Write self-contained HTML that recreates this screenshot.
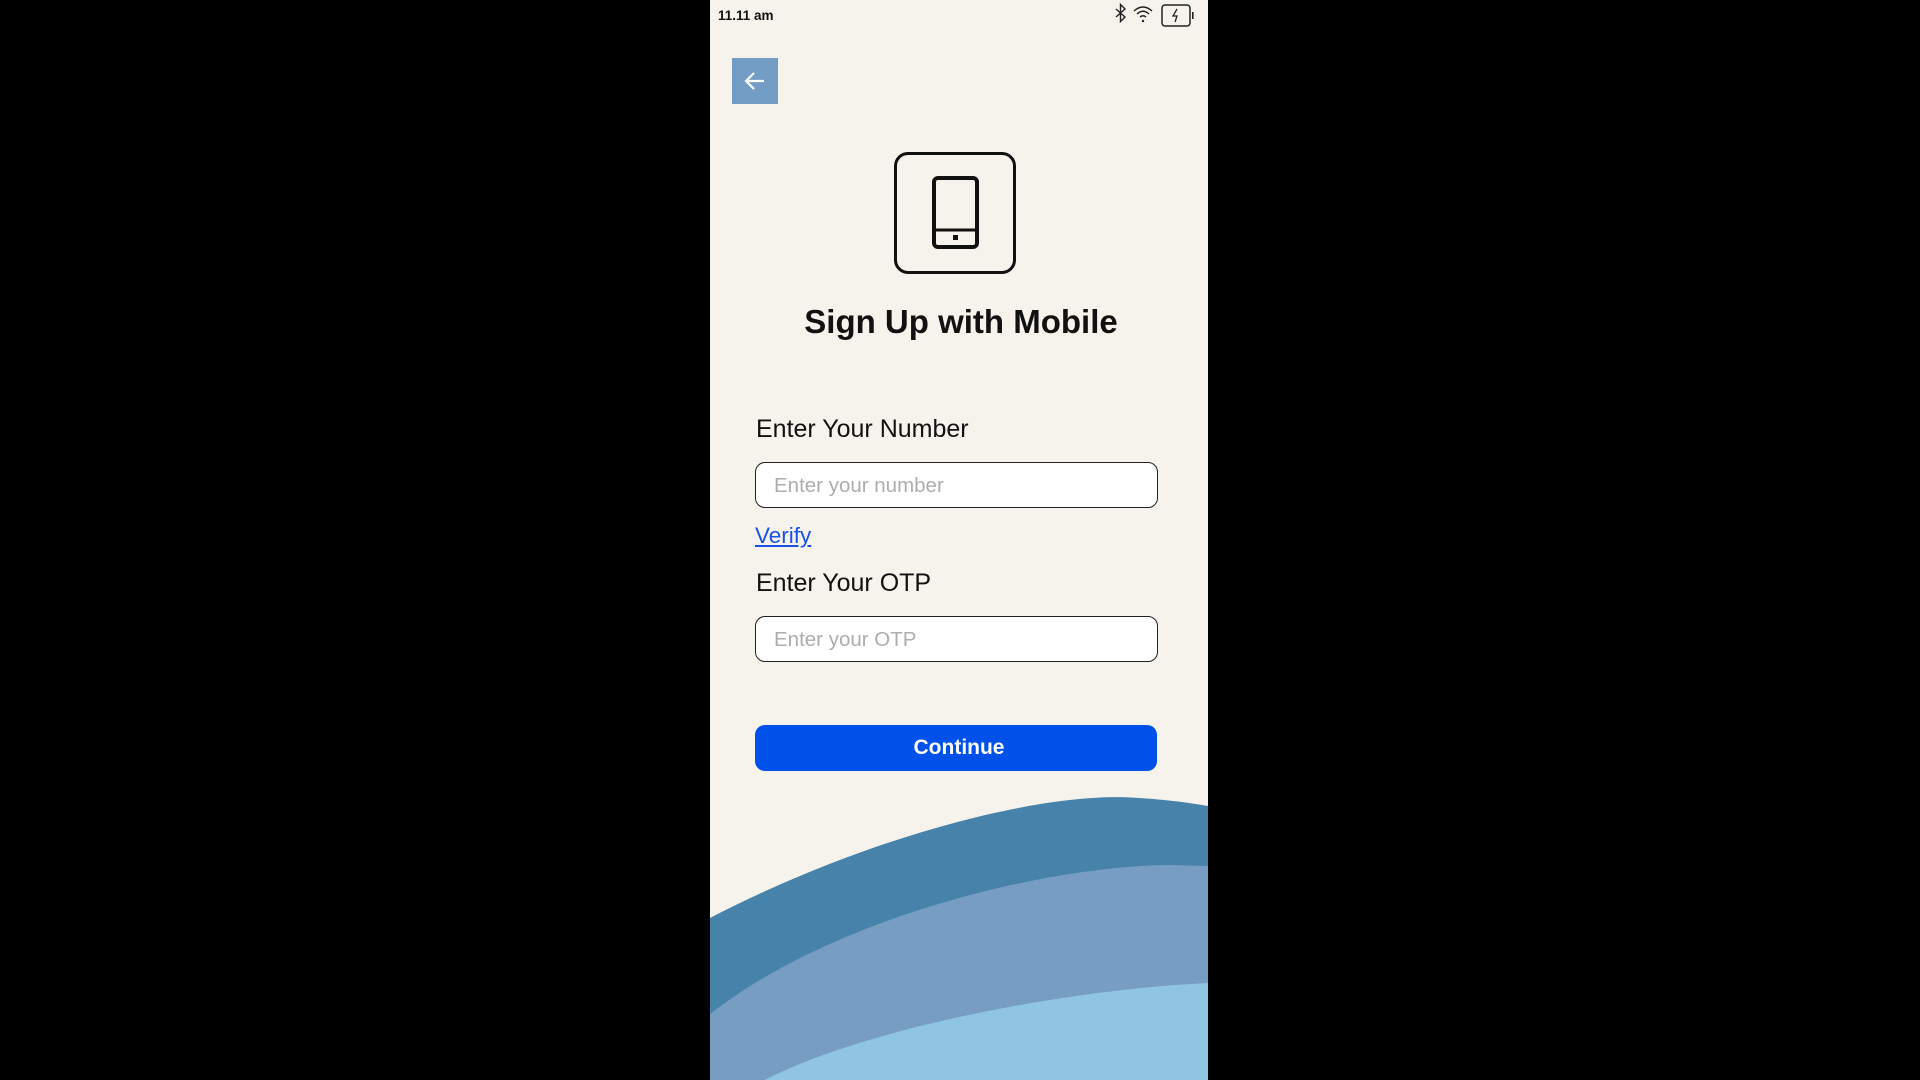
<!DOCTYPE html>
<html><head><meta charset="utf-8"><style>
html,body{margin:0;padding:0;background:#000;width:1920px;height:1080px;overflow:hidden;font-family:"Liberation Sans",sans-serif}
#ph{position:absolute;left:710px;top:0;width:498px;height:1080px;background:#f6f3ec;overflow:hidden}
.a{position:absolute}
.inp{position:absolute;left:45px;width:403px;height:46px;border:1.5px solid #222;border-radius:10px;background:#fff;box-sizing:border-box}
.inp span{position:absolute;left:18px;top:11px;font-size:20.5px;color:#adadad}
.lbl{position:absolute;left:46px;font-size:25px;color:#111}
</style></head><body>
<div id="ph">
<div class="a" style="left:8px;top:8px;font-size:13.5px;font-weight:bold;color:#111">11.11 am</div>
<svg class="a" style="left:402px;top:2px" width="96" height="26" viewBox="0 0 96 26">
<path d="M4 7 L13 15 L8.5 19.5 L8.5 2.5 L13 7 L4 15" fill="none" stroke="#222" stroke-width="1.4"/>
<path d="M22 9 Q31 1 40 9 M25 12 Q31 6.5 37 12 M28 15 Q31 12.5 34 15" fill="none" stroke="#222" stroke-width="1.5"/>
<circle cx="31" cy="19" r="1.2" fill="#222"/>
<rect x="50" y="3" width="28" height="21" rx="3" fill="none" stroke="#222" stroke-width="1.5"/>
<rect x="80" y="10" width="1.6" height="7" fill="#222"/>
<path d="M65 7 L61 14 L65 14 L63 20" fill="none" stroke="#222" stroke-width="1.3"/>
</svg>
<div class="a" style="left:22px;top:58px;width:46px;height:46px;background:#739dc4"></div>
<svg class="a" style="left:22px;top:58px" width="46" height="46"><path d="M32 23 H14 M22 15 L14 23 L22 31" fill="none" stroke="#fff" stroke-width="2.2"/></svg>
<div class="a" style="left:184px;top:152px;width:122px;height:122px;border:3px solid #111;border-radius:14px;box-sizing:border-box"></div>
<svg class="a" style="left:222px;top:176px" width="50" height="74"><rect x="2" y="2" width="43" height="69" rx="4" fill="none" stroke="#111" stroke-width="4"/><path d="M2 54 H45" stroke="#111" stroke-width="3"/><rect x="21" y="59" width="5" height="5" fill="#111"/></svg>
<div class="a" style="left:0;width:498px;text-align:center;top:303px;font-size:33px;font-weight:bold;color:#111;padding-left:4px;box-sizing:border-box">Sign Up with Mobile</div>
<div class="lbl" style="top:415px">Enter Your Number</div>
<div class="inp" style="top:462px"><span>Enter your number</span></div>
<div class="a" style="left:45px;top:523px;font-size:22.5px;color:#1a52e6;text-decoration:underline">Verify</div>
<div class="lbl" style="top:569px">Enter Your OTP</div>
<div class="inp" style="top:616px"><span>Enter your OTP</span></div>
<div class="a" style="left:45px;top:725px;width:402px;height:46px;background:#0050ea;border-radius:10px;color:#fff;font-size:21px;font-weight:bold;text-align:center;line-height:46px;padding-left:6px;box-sizing:border-box">Continue</div>
<svg class="a" style="left:0;top:0" width="498" height="1080">
<path d="M0,918 C150,840 330,790 429,798 C460,800 480,803 498,806 L498,1080 L0,1080 Z" fill="#4682aa"/>
<path d="M0,1014 C120,920 330,866 460,865 L498,866 V1080 H0Z" fill="#779dc2"/>
<path d="M55,1080 C150,1030 350,990 498,983 V1080Z" fill="#8fc5e2"/>
</svg>
</div>
</body></html>
